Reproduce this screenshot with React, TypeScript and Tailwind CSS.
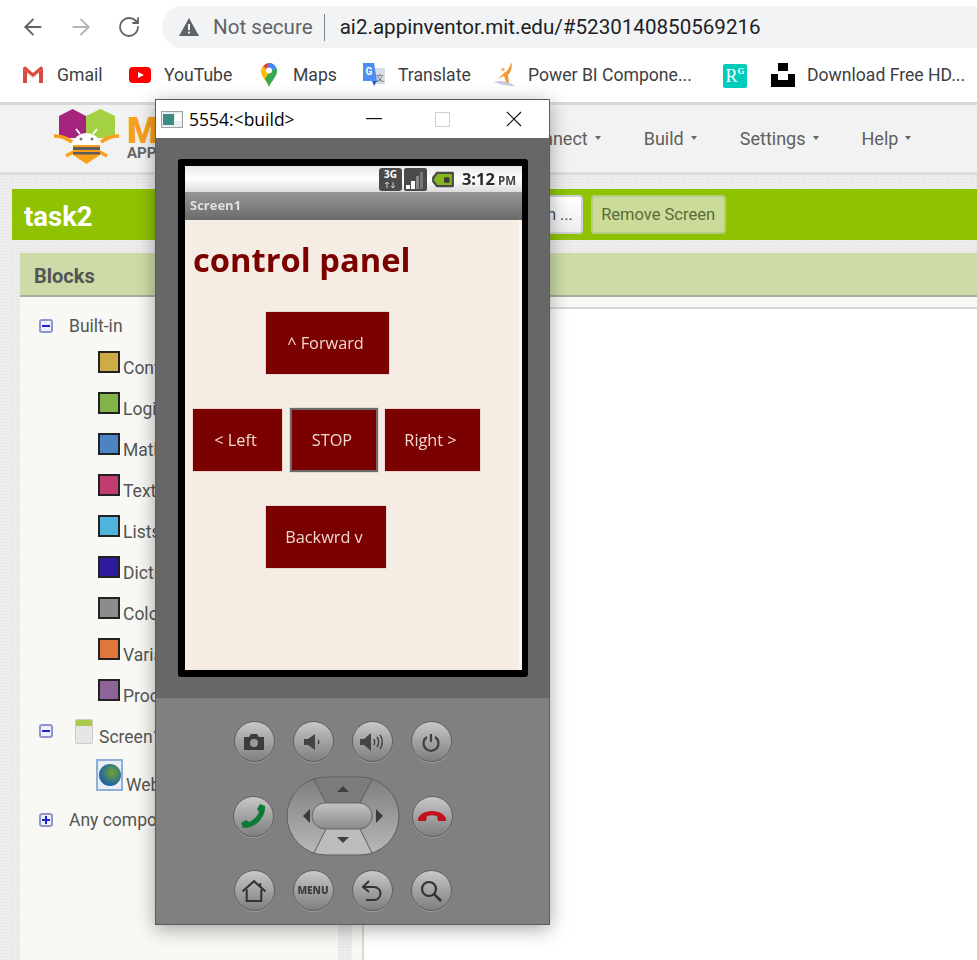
import React from "react";
import { ArrowLeft, ArrowRight, RotateCw } from "lucide-react";

const Gmail = () => (
  <svg width="22" height="18" viewBox="0 0 22 18" className="shrink-0">
    <path d="M1 3v14h4V8l6 5 6-5v9h4V3l-2-2-8 6-8-6z" fill="#e8e8e8" />
    <path d="M1 17V3l4 3v11z" fill="#d54c3f" />
    <path d="M21 17V3l-4 3v11z" fill="#d54c3f" />
    <path d="M1 3c0-2 2-3 3-2l7 6 7-6c1-1 3 0 3 2l-10 8z" fill="#dd4b3e" />
  </svg>
);
const YouTube = () => (
  <svg width="22" height="16" viewBox="0 0 22 16" className="shrink-0">
    <rect width="22" height="16" rx="4" fill="#fe0000" />
    <path d="M9 5l6 3-6 3z" fill="#fff" />
  </svg>
);
const Maps = () => (
  <svg width="18" height="26" viewBox="0 0 18 26" className="shrink-0">
    <path d="M9 25C7 19 1 15 1 9c0-2 1-4 2-5l6 7z" fill="#fbbc04" />
    <path d="M9 25c2-6 8-10 8-16 0-1 0-2-1-4L9 11 5 17c2 3 3 5 4 8z" fill="#34a853" />
    <path d="M3 4C5 2 7 1 9 1l4 1-4 9z" fill="#ea4335" />
    <path d="M9 1c3 0 6 2 7 4l-7 6-2-4z" fill="#4285f4" />
    <circle cx="9" cy="8.500" r="3" fill="#fff" />
  </svg>
);
const Translate = () => (
  <svg width="24" height="24" viewBox="0 0 24 24" className="shrink-0">
    <path d="M10 5h13v16H13z" fill="#d9dde3" />
    <text x="13.500" y="18" fontSize="8.500" fill="#5f6368" fontFamily="'Noto Sans CJK SC',sans-serif">文</text>
    <path d="M1 0h11l3 18H1z" fill="#4d8df5" />
    <path d="M10 18l5 0-3 5z" fill="#2f62c4" />
    <text x="3.500" y="12" fontSize="10" fontWeight="700" fill="#fff" fontFamily="Roboto,sans-serif">G</text>
  </svg>
);
const PowerBI = () => (
  <svg width="24" height="26" viewBox="0 0 24 26" className="shrink-0">
    <path d="M1 20c6-2 14-1 21 4-7 0-14-1-21-4z" fill="#c9c9e0" />
    <path d="M18 0c2 5 0 10-3 13l1 8-3-1-2-6-6 3 7-7c3-1 5-5 6-10z" fill="#f2993a" />
    <circle cx="10" cy="7.500" r="1.800" fill="#f2b36e" />
  </svg>
);
const RG = () => (
  <div className="flex h-6 w-6 shrink-0 items-center justify-center rounded-[2px] bg-[#00ccbb] font-['Liberation_Serif',serif] text-white">
    <span className="text-[18px] leading-none">R</span>
    <span className="mb-2 text-[9px] font-bold leading-none">G</span>
  </div>
);
const Unsplash = () => (
  <svg width="24" height="24" viewBox="0 0 24 24" className="shrink-0">
    <path d="M7 0h10v8H7zM0 11h7v6h10v-6h7v13H0z" fill="#000" />
  </svg>
);

const Bookmark = ({ icon, label, w, iw }: { icon: React.ReactNode; label?: string; w: string; iw: string }) => (
  <div className={`flex items-center ${w}`}>
    <div className={`flex shrink-0 items-center ${iw}`}>{icon}</div>
    {label && <span className="whitespace-nowrap">{label}</span>}
  </div>
);

const Menu = ({ label, className }: { label: string; className: string }) => (
  <div className={`flex items-center gap-[7px] whitespace-nowrap ${className}`}>
    <span>{label}</span>
    <span className="mt-[-2px] h-0 w-0 border-x-[3px] border-t-[4px] border-x-transparent border-t-[#666]" />
  </div>
);

const Expander = ({ plus }: { plus?: boolean }) => (
  <span className="relative block h-[14px] w-[14px] shrink-0 rounded-[3px] border-2 border-[#8f95d0] bg-[#eef0fa]">
    <span className="absolute left-[1px] top-[4px] h-[2px] w-2 bg-[#2222cc]" />
    {plus && <span className="absolute left-[4px] top-[1px] h-2 w-[2px] bg-[#2222cc]" />}
  </span>
);

const categories = [
  ["Control", "bg-[#cfab47]"],
  ["Logic", "bg-[#84b349]"],
  ["Math", "bg-[#4b83c3]"],
  ["Text", "bg-[#c23d6f]"],
  ["Lists", "bg-[#4fb4dd]"],
  ["Dictionaries", "bg-[#2d1a9c]"],
  ["Colors", "bg-[#8c8c8c]"],
  ["Variables", "bg-[#e0763b]"],
  ["Procedures", "bg-[#8e6398]"],
];

const Round = ({ children }: { children: React.ReactNode }) => (
  <div className="flex h-[41px] w-[41px] shrink-0 items-center justify-center rounded-full border border-[#5f5f5f] bg-gradient-to-b from-[#c8c8c8] to-[#7f7f7f] shadow-[0_1px_0_#999]">
    {children}
  </div>
);

const DPad = () => (
  <svg width="114" height="80" viewBox="0 0 114 80" className="shrink-0">
    <defs>
      <linearGradient id="dp" x1="0" y1="0" x2="0" y2="1"><stop offset="0" stopColor="#7d7d7d" /><stop offset="1" stopColor="#b9b9b9" /></linearGradient>
      <linearGradient id="dc" x1="0" y1="0" x2="0" y2="1"><stop offset="0" stopColor="#c4c4c4" /><stop offset="1" stopColor="#8a8a8a" /></linearGradient>
    </defs>
    <rect x="1" y="1" width="112" height="78" rx="39" fill="url(#dp)" stroke="#5e5e5e" />
    <path d="M28 3h58L74 27H40z" fill="#7c7c7c" />
    <path d="M28 77h58L74 53H40z" fill="#bcbcbc" />
    <path d="M28 3L40 27M86 3L74 27M28 77L40 53M86 77L74 53" stroke="#5e5e5e" strokeWidth="1" />
    <path d="M51 16l6-6 6 6z" fill="#3f3f3f" />
    <path d="M51 64l6 6 6-6z" fill="#3f3f3f" transform="translate(0 -3)" />
    <path d="M17 40l7-7v14z" fill="#3a3a3a" />
    <path d="M97 40l-7-7v14z" fill="#3a3a3a" />
    <rect x="26" y="27" width="60" height="26" rx="13" fill="url(#dc)" stroke="#666" />
  </svg>
);

const Droid = ({ children, className }: { children: React.ReactNode; className: string }) => (
  <div className={`flex h-[62px] items-center justify-center bg-[#7b0000] pr-[4px] text-[16.300px] text-[#f1d9d2] shadow-[0_0_1px_#b66] ${className}`}>{children}</div>
);

const Emulator = () => (
  <div className="absolute left-[155px] top-[99px] flex h-[826px] w-[395px] flex-col border border-[#5c5c5c] bg-white shadow-[0_4px_18px_rgba(0,0,0,0.35)]">
    <div className="flex h-[38px] shrink-0 items-center font-['Open_Sans',sans-serif] text-[17.500px] text-black">
      <svg width="22" height="17" viewBox="0 0 22 17" className="ml-[5px]">
        <rect x="0.500" y="0.500" width="21" height="16" fill="#e8eef2" stroke="#9aa4aa" />
        <rect x="2" y="3" width="11" height="11" fill="#3d8a83" />
        <rect x="14" y="3" width="6" height="7" fill="#fff" />
      </svg>
      <span className="ml-[6px] whitespace-nowrap">5554:&lt;build&gt;</span>
      <svg width="16" height="2" viewBox="0 0 16 2" className="ml-[71px]"><rect width="16" height="1.200" fill="#111" /></svg>
      <div className="ml-[53px] h-[15px] w-[15px] border border-[#cfcfcf]" />
      <svg width="16" height="16" viewBox="0 0 16 16" className="ml-[56px]"><path d="M1 1l14 14M15 1L1 15" stroke="#111" strokeWidth="1.100" /></svg>
    </div>

    <div className="flex h-[560px] shrink-0 flex-col bg-[#676767] pl-[22px] pt-[21px] font-['Open_Sans',sans-serif]">
      <div className="h-[518px] w-[350px] rounded-[3px] border-[7px] border-r-[6px] border-black bg-[#f5ece3]">
        <div className="flex h-full flex-col blur-[0.4px]">
          <div className="flex h-[26px] shrink-0 items-center justify-end bg-gradient-to-b from-[#e9e9e9] via-white to-[#dcdcdc] pr-[6px]">
            <div className="flex h-[23px] w-[23px] flex-col items-center rounded-[3px] bg-[#4a4a4a] text-[10px] font-bold leading-[13px] text-white">
              3G
              <svg width="12" height="6" viewBox="0 0 12 6" className="mt-[1px]"><path d="M3 0v6M1 2l2-2 2 2M9 0v6M7 4l2 2 2-2" stroke="#ccc" strokeWidth="1" fill="none" /></svg>
            </div>
            <div className="ml-[2px] flex h-[23px] w-[23px] items-end gap-[1px] rounded-[2px] bg-[#4a4a4a] px-[2px] pb-[2px]">
              <span className="h-[4px] w-[4px] bg-white" /><span className="h-[8px] w-[4px] bg-white" /><span className="h-[13px] w-[3px] bg-[#888]" /><span className="h-[17px] w-[3px] bg-[#777]" />
            </div>
            <svg width="24" height="19" viewBox="0 0 22 16" className="ml-[4px]">
              <path d="M5 1h15a1 1 0 0 1 1 1v12a1 1 0 0 1-1 1H5l-4-5V6z" fill="#4a4a4a" />
              <path d="M6 3h13v10H6l-3-4V7z" fill="#85b81c" />
              <rect x="12" y="6" width="5" height="5" fill="#3a3a3a" />
            </svg>
            <span className="ml-[7px] text-[16.500px] font-bold text-[#2b2b2b]">3:12</span>
            <span className="ml-[3px] mt-[3px] text-[11.500px] font-bold text-[#444]">PM</span>
          </div>
          <div className="flex h-[28px] shrink-0 items-center bg-gradient-to-b from-[#979797] to-[#6a6a6a] pl-[5px] text-[13px] font-bold text-[#e0e0e0]">Screen1</div>
          <div className="flex min-h-0 flex-1 flex-col border-r-[3px] border-white/60">
            <div className="ml-[8px] mt-[16px] h-[48px] text-[32.700px] font-bold leading-[48px] text-[#7b0000]">control panel</div>
            <Droid className="ml-[81px] mt-[28px] w-[123px]">^ Forward</Droid>
            <div className="ml-[8px] mt-[34px] flex h-[64px] items-center">
              <Droid className="w-[89px]">&lt; Left</Droid>
              <Droid className="ml-[8px] h-[64px] w-[88px] border-2 border-[#6b6b6b]">STOP</Droid>
              <Droid className="ml-[7px] w-[95px]">Right &gt;</Droid>
            </div>
            <Droid className="ml-[81px] mt-[34px] w-[120px]">Backwrd v</Droid>
          </div>
        </div>
      </div>
    </div>

    <div className="flex flex-1 flex-col items-center bg-[#808080] pr-[20px] pt-[23px] blur-[0.3px]">
      <div className="flex gap-[18px]">
        <Round><svg width="22" height="18" viewBox="0 0 22 18"><path d="M1 4h5l2-3h6l2 3h5v13H1z" fill="#3c3c3c" /><circle cx="11" cy="10" r="4" fill="#999" /></svg></Round>
        <Round><svg width="22" height="18" viewBox="0 0 22 18"><path d="M2 6h4l7-5v16l-7-5H2z" fill="#444" /><path d="M16 7c1 1 1 3 0 4" stroke="#444" strokeWidth="1.500" fill="none" /></svg></Round>
        <Round><svg width="26" height="20" viewBox="0 0 26 20"><path d="M1 7h4l7-6v18l-7-6H1z" fill="#444" /><path d="M15 7c1 2 1 4 0 6M18 5c2 3 2 7 0 10M21 3c3 4 3 10 0 14" stroke="#444" strokeWidth="1.500" fill="none" /></svg></Round>
        <Round><svg width="20" height="20" viewBox="0 0 20 20"><path d="M6 5a7.500 7.500 0 1 0 8 0" stroke="#3f3f3f" strokeWidth="2.200" fill="none" /><path d="M10 2v8" stroke="#3f3f3f" strokeWidth="2.200" /></svg></Round>
      </div>
      <div className="mt-[14px] flex items-center gap-[12px]">
        <Round><svg width="26" height="26" viewBox="0 0 26 26"><path d="M25 3l-5-2-3 5 2 3c-2 5-5 8-10 10l-3-2-5 3 2 5c11 1 23-10 22-22z" fill="#0c7a35" /></svg></Round>
        <DPad />
        <Round><svg width="30" height="14" viewBox="0 0 30 14"><path d="M1 12c-1-6 7-10 14-10s15 4 14 10l-8 0-1-5c-3-1-7-1-10 0l-1 5z" fill="#c2101c" /></svg></Round>
      </div>
      <div className="mt-[14px] flex gap-[18px]">
        <Round><svg width="28" height="25" viewBox="0 0 26 24"><path d="M2 13L13 3l11 10M6 11v11h14V11M19 5v3" stroke="#333" strokeWidth="2" fill="none" /></svg></Round>
        <Round><span className="font-['Open_Sans',sans-serif] text-[10px] font-extrabold text-[#3f3f3f]">MENU</span></Round>
        <Round><svg width="22" height="24" viewBox="0 0 22 24"><path d="M8 2L2 8l6 5M2 8h11a5.500 5.500 0 0 1 0 13H5" stroke="#333" strokeWidth="2" fill="none" /></svg></Round>
        <Round><svg width="24" height="24" viewBox="0 0 24 24"><circle cx="10" cy="10" r="7" stroke="#333" strokeWidth="2.200" fill="none" /><path d="M15 15l7 7" stroke="#333" strokeWidth="2.500" /></svg></Round>
      </div>
    </div>
  </div>
);

const texture = "bg-[#ededed] bg-[radial-gradient(#dfdfdf_1px,transparent_1px)] bg-[size:3px_3px]";

export default function App() {
  return (
    <div className="relative flex h-[960px] w-[977px] flex-col overflow-hidden bg-white font-['Roboto',sans-serif]">
      <div className="flex h-[57px] shrink-0 items-center pb-[3px] text-[#5f6368]">
        <ArrowLeft size={26} strokeWidth={1.800} className="ml-[20px]" />
        <ArrowRight size={26} strokeWidth={1.800} className="ml-[22px] text-[#b4b6b9]" />
        <RotateCw size={24} strokeWidth={1.800} className="ml-[23px]" />
        <div className="ml-[21px] flex h-[42px] flex-1 items-center rounded-l-[21px] bg-[#f1f3f4] pl-[17px] text-[20.600px]">
          <svg width="20" height="18" viewBox="0 0 20 18"><path d="M10 0l10 18H0z" fill="#5f6368" /><rect x="9" y="6" width="2" height="6" fill="#f1f3f4" /><rect x="9" y="13.500" width="2" height="2" fill="#f1f3f4" /></svg>
          <span className="ml-[14px] text-[#5f6368]">Not secure</span>
          <span className="ml-[11px] h-[27px] w-px bg-[#80868b]" />
          <span className="ml-[15px] text-[#202124]">ai2.appinventor.mit.edu/#5230140850569216</span>
        </div>
      </div>

      <div className="flex h-[45px] shrink-0 items-center pb-[8px] pl-[22px] text-[17.600px] text-[#3c4043]">
        <Bookmark icon={<Gmail />} label="Gmail" w="w-[107px]" iw="w-[35px]" />
        <Bookmark icon={<YouTube />} label="YouTube" w="w-[131px]" iw="w-[35px]" />
        <Bookmark icon={<Maps />} label="Maps" w="w-[102px]" iw="w-[33px]" />
        <Bookmark icon={<Translate />} label="Translate" w="w-[131px]" iw="w-[36px]" />
        <Bookmark icon={<PowerBI />} label="Power BI Compone..." w="w-[230px]" iw="w-[35px]" />
        <Bookmark icon={<RG />} w="w-[48px]" iw="w-[24px]" />
        <Bookmark icon={<Unsplash />} label="Download Free HD..." w="w-[206px]" iw="w-[36px]" />
      </div>

      <div className="flex h-[73px] shrink-0 items-center border-y-[3px] border-t-[#d8d8d8] border-b-[#dcdcdc] bg-[#f2f2f2] text-[18px] text-[#5f5f5f]">
        <svg width="68" height="58" viewBox="0 0 68 58" className="mb-[6px] ml-[53px] shrink-0">
          <path d="M6 9L19.500 2 33 9v22H6z" fill="#a4247e" />
          <path d="M33 9l14.500-7L62 9v22H33z" fill="#a4d143" />
          <path d="M1 29c8 0 12 2 18 6M66 29c-8 0-12 2-18 6M13 49l9-5M54 49l-9-5" stroke="#f9a01b" strokeWidth="3.500" fill="none" />
          <path d="M27 27l-4-5M40 27l4-5" stroke="#fff" strokeWidth="2" />
          <path d="M20 38a13.500 12 0 0 1 27 0z" fill="#fff" />
          <circle cx="28" cy="32" r="1.500" fill="#777" /><circle cx="39" cy="32" r="1.500" fill="#777" />
          <path d="M20 38h27v10l-13.500 9L20 48z" fill="#f9a01b" />
          <rect x="20" y="40" width="27" height="3" fill="#5c5c5c" /><rect x="20" y="45" width="27" height="2.500" fill="#5c5c5c" />
        </svg>
        <div className="ml-[6px] flex w-[60px] shrink-0 flex-col">
          <span className="text-[36px] font-black leading-[29px] text-[#f9a01b]">MIT</span>
          <span className="text-[15px] font-bold leading-[14px] text-[#666]">APP</span>
        </div>
        <Menu label="Connect" className="ml-[334px]" />
        <Menu label="Build" className="ml-[43px]" />
        <Menu label="Settings" className="ml-[43px]" />
        <Menu label="Help" className="ml-[43px]" />
      </div>

      <div className={`flex min-h-0 flex-1 flex-col pt-[14px] ${texture}`}>
        <div className="ml-[12px] flex h-[51px] shrink-0 items-center bg-[#8fc202]">
          <span className="ml-[12px] pt-[5px] text-[27.500px] font-bold text-white">task2</span>
          <div className="ml-[395px] flex h-[39px] w-[95px] items-center justify-end rounded-[4px] border-2 border-[#cfcfd6] bg-gradient-to-b from-white to-[#ececec] pr-[8px] text-[16px] text-[#444]">Design ...</div>
          <div className="ml-[8px] flex h-[39px] w-[135px] items-center justify-center rounded-[4px] border-2 border-[#b5cc83] bg-[#cbdb99] pt-[2px] text-[16.500px] text-[#5b6b36]">Remove Screen</div>
        </div>

        <div className="mt-[13px] flex min-h-0 flex-1">
          <div className="ml-[20px] flex w-[318px] shrink-0 flex-col">
            <div className="flex h-[44px] shrink-0 items-center border-b-[2px] border-[#a9ad9f] bg-[#cddba8] pl-[14px] pt-[3px] text-[20px] font-bold text-[#555]">Blocks</div>
            <div className="flex-1 bg-[#f8f9f4] pl-[19px] pt-[13px] text-[17.500px] text-[#555]">
              <div className="flex h-[32px] items-center"><Expander /><span className="ml-[16px]">Built-in</span></div>
              {categories.map(([name, color]) => (
                <div key={name} className="ml-[59px] flex h-[41px] items-start pt-[9px]">
                  <span className={`h-[22px] w-[22px] shrink-0 border-2 border-[#222] ${color}`} />
                  <span className="ml-[3px] mt-[7px] leading-[20px]">{name}</span>
                </div>
              ))}
              <div className="flex h-[40px] items-center">
                <Expander />
                <span className="ml-[22px] h-[25px] w-[18px] shrink-0 rounded-[2px] border border-[#ccc] bg-[#e6e6e6] shadow-[inset_0_6px_0_#a9c94a]" />
                <span className="ml-[6px] mt-[12px]">Screen1</span>
              </div>
              <div className="ml-[57px] flex h-[48px] items-center">
                <span className="flex h-[32px] w-[27px] shrink-0 items-center justify-center border-2 border-[#8eb0d6] bg-[#e8eef4]">
                  <span className="h-[22px] w-[22px] rounded-full bg-[radial-gradient(circle_at_60%_40%,#6ea52f,#1f5fa8_70%)]" />
                </span>
                <span className="ml-[3px] mt-[20px]">WebViewer1</span>
              </div>
              <div className="flex h-[42px] items-center"><Expander plus /><span className="ml-[16px]">Any component</span></div>
            </div>
          </div>
          <div className="ml-[14px] flex flex-1 flex-col">
            <div className="h-[44px] shrink-0 border-b-[2px] border-[#a9ad9f] bg-[#cddba8]" />
            <div className="flex flex-1 flex-col bg-[#f8f9f4] pl-[10px] pt-[10px]">
              <div className="flex-1 border-l-2 border-t-2 border-[#d8d8d8] bg-white" />
            </div>
          </div>
        </div>
      </div>

      <Emulator />
    </div>
  );
}
